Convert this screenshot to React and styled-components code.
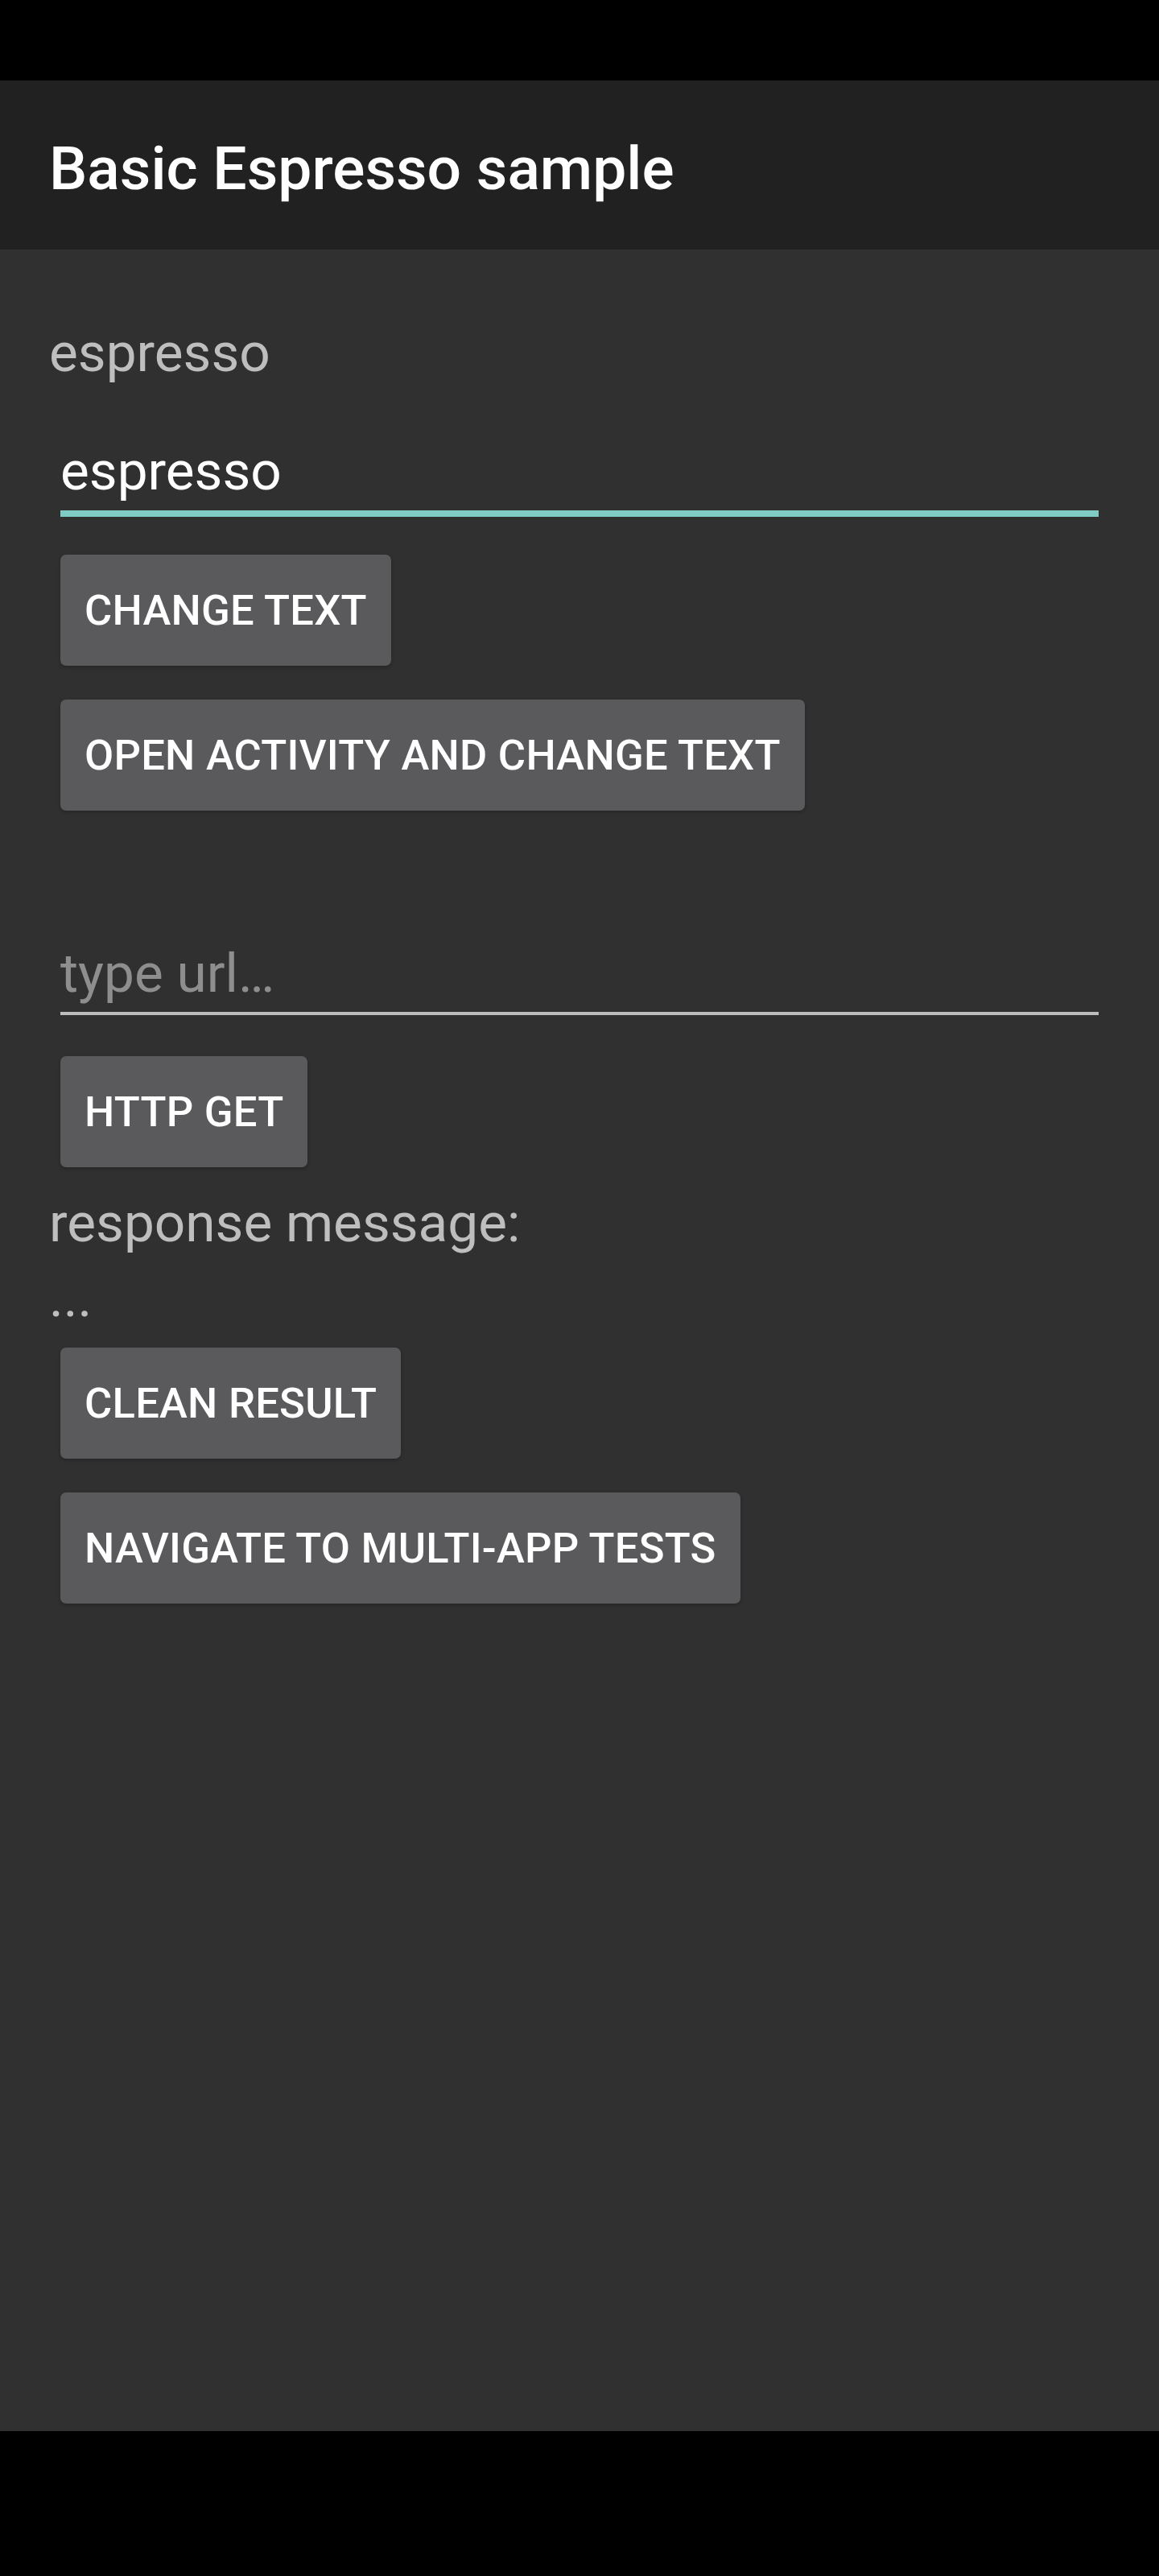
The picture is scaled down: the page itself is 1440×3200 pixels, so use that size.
import React from 'react';
import styled, { createGlobalStyle } from 'styled-components';

const GlobalStyle = createGlobalStyle`
  html, body {
    margin: 0;
    padding: 0;
    background: #000;
  }
  body {
    font-family: Roboto, 'Noto Sans', sans-serif;
  }
`;

const Screen = styled.div`
  display: flex;
  flex-direction: column;
  width: 1440px;
  height: 3200px;
  background: #000;
`;

const SystemBar = styled.div`
  flex-shrink: 0;
  height: ${props => props.$height}px;
  background: #000;
`;

const Toolbar = styled.header`
  flex-shrink: 0;
  display: flex;
  align-items: center;
  box-sizing: border-box;
  height: 210px;
  padding: 7px 61px 0;
  background: #212121;
`;

const Title = styled.h1`
  margin: 0;
  font-size: 75px;
  font-weight: 500;
  line-height: 88px;
  color: #fff;
`;

const Content = styled.main`
  flex: 1;
  display: flex;
  flex-direction: column;
  align-items: flex-start;
  padding: 88px 61px 0;
  background: #303030;
`;

const Label = styled.div`
  margin-top: ${props => props.$top || 0}px;
  font-size: 67.5px;
  line-height: 79px;
  color: #bebebe;
`;

const Field = styled.input`
  align-self: stretch;
  margin: ${props => props.$top}px 14px 0;
  height: 79px;
  padding: 0 0 ${props => (props.$focused ? 10 : 9)}px;
  border: none;
  border-bottom: ${props => (props.$focused ? '8px solid #80cbc4' : '4px solid #bdbdbd')};
  background: transparent;
  font-family: inherit;
  font-size: 67.5px;
  color: #fff;
  outline: none;

  &::placeholder {
    color: #8e8e8e;
  }
`;

const Button = styled.button`
  display: flex;
  align-items: center;
  margin: ${props => props.$top}px 0 0 14px;
  height: 138px;
  padding: 0 30px;
  border: none;
  border-radius: 7px;
  background: #5a595b;
  box-shadow: 0 2px 4px rgba(0, 0, 0, 0.25);
  font-family: inherit;
  font-size: 52.5px;
  font-weight: 500;
  letter-spacing: 0.25px;
  text-transform: uppercase;
  color: #fff;
  cursor: pointer;
`;

const App = () => {
  return (
    <Screen>
      <GlobalStyle />
      <SystemBar $height={100} />
      <Toolbar>
        <Title>Basic Espresso sample</Title>
      </Toolbar>
      <Content>
        <Label>espresso</Label>
        <Field $top={68} $focused defaultValue="espresso" />
        <Button $top={47}>Change text</Button>
        <Button $top={42}>Open activity and change text</Button>
        <Field $top={162} placeholder="type url…" />
        <Button $top={51}>HTTP GET</Button>
        <Label $top={29}>response message:</Label>
        <Label $top={14}>...</Label>
        <Button $top={23}>Clean result</Button>
        <Button $top={42}>Navigate to multi-app tests</Button>
      </Content>
      <SystemBar $height={180} />
    </Screen>
  );
};

export default App;
